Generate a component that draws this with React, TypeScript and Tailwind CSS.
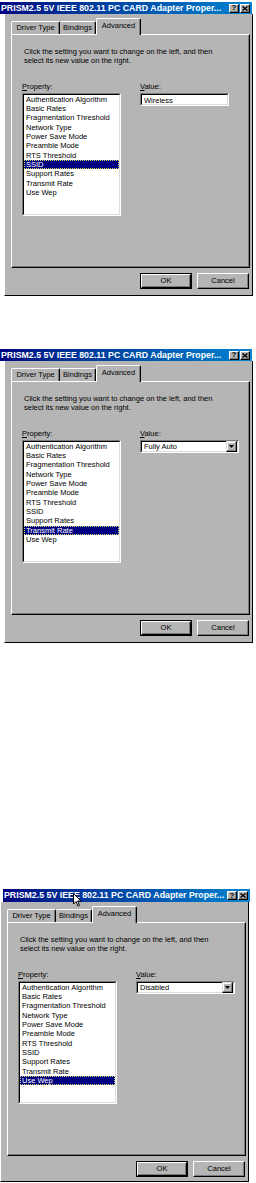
import React from "react";

const items = [
  "Authentication Algorithm",
  "Basic Rates",
  "Fragmentation Threshold",
  "Network Type",
  "Power Save Mode",
  "Preamble Mode",
  "RTS Threshold",
  "SSID",
  "Support Rates",
  "Transmit Rate",
  "Use Wep",
];

function TitleBtn({ children }: { children: React.ReactNode }) {
  return (
    <div className="flex h-[9px] w-[10px] items-center justify-center border border-t-white border-l-white border-r-black border-b-black bg-[#b5b5b5] shadow-[inset_-1px_-1px_#7b7b7b]">
      {children}
    </div>
  );
}

function TitleBar({ cls }: { cls: string }) {
  return (
    <div className={`flex items-center justify-between bg-linear-to-r from-[#000080] to-[#1084d0] ${cls}`}>
      <span className="whitespace-nowrap pl-[1px] text-[8.8px] font-bold leading-none text-white">
        PRISM2.5 5V IEEE 802.11 PC CARD Adapter Proper...
      </span>
      <div className="flex gap-[1px] pr-[2px]">
        <TitleBtn>
          <span className="text-[8px] font-bold leading-none text-black">?</span>
        </TitleBtn>
        <TitleBtn>
          <svg width="6" height="5" viewBox="0 0 6 5">
            <path d="M0.5 0.5 L5.5 4.5 M5.5 0.5 L0.5 4.5" stroke="black" strokeWidth="1.4" />
          </svg>
        </TitleBtn>
      </div>
    </div>
  );
}

function Sunken({ cls, children }: { cls: string; children?: React.ReactNode }) {
  return (
    <div className={`border border-t-[#7b7b7b] border-l-[#7b7b7b] border-r-white border-b-white ${cls}`}>
      <div className="h-full w-full border border-t-black border-l-black border-r-[#dcdcdc] border-b-[#dcdcdc] bg-white">
        {children}
      </div>
    </div>
  );
}

function Btn({ label, def }: { label: string; def?: boolean }) {
  if (def) {
    return (
      <div className="h-[16px] w-[52px] border border-black">
        <div className="flex h-full w-full items-center justify-center border border-t-white border-l-white border-r-black border-b-black shadow-[inset_-1px_-1px_#7b7b7b]">
          <span className="text-[7.5px] leading-none text-black">{label}</span>
        </div>
      </div>
    );
  }
  return (
    <div className="flex h-[16px] w-[52px] items-center justify-center border border-t-white border-l-white border-r-black border-b-black shadow-[inset_-1px_-1px_#7b7b7b]">
      <span className="text-[7.5px] leading-none text-black">{label}</span>
    </div>
  );
}

function ValueControl({ kind, value }: { kind: "text" | "combo"; value: string }) {
  if (kind === "text") {
    return (
      <Sunken cls="mt-[1px] h-[13px] w-[89px]">
        <div className="pl-[2px] text-[7.5px] leading-[11px] text-black">{value}</div>
      </Sunken>
    );
  }
  return (
    <Sunken cls="mt-[1px] h-[13px] w-[99px]">
      <div className="flex h-full items-center justify-between">
        <div className="pl-[2px] text-[7.5px] leading-[11px] text-black">{value}</div>
        <div className="flex h-[11px] w-[11px] items-center justify-center border border-t-[#dcdcdc] border-l-[#dcdcdc] border-r-black border-b-black bg-[#b5b5b5] shadow-[inset_-1px_-1px_#7b7b7b,inset_1px_1px_white]">
          <svg width="5" height="3" viewBox="0 0 5 3">
            <path d="M0 0 H5 L2.5 3 Z" fill="black" />
          </svg>
        </div>
      </div>
    </Sunken>
  );
}

function Dialog({
  titleCls,
  bodyCls,
  selected,
  kind,
  value,
}: {
  titleCls: string;
  bodyCls: string;
  selected: number;
  kind: "text" | "combo";
  value: string;
}) {
  return (
    <div className="flex flex-col">
      <TitleBar cls={titleCls} />
      <div className={`flex flex-col border-l border-r border-b border-l-white border-r-black border-b-black bg-[#b5b5b5] ${bodyCls}`}>
        {/* tabs */}
        <div className="ml-[6px] mt-[4px] flex h-[16px] items-end">
          <div className="flex h-[13px] w-[49px] items-center justify-center rounded-t-[2px] border-t border-l border-r border-t-white border-l-white border-r-black shadow-[inset_-1px_0_#7b7b7b]">
            <span className="text-[7.5px] leading-none text-black">Driver Type</span>
          </div>
          <div className="flex h-[13px] w-[36px] items-center justify-center rounded-t-[2px] border-t border-r border-t-white border-r-black shadow-[inset_-1px_0_#7b7b7b]">
            <span className="text-[7.5px] leading-none text-black">Bindings</span>
          </div>
          <div className="relative z-10 -mb-[1px] flex h-[17px] w-[45px] items-start justify-center rounded-t-[2px] border-t border-l border-r border-t-white border-l-white border-r-black bg-[#b5b5b5] pt-[3px] shadow-[inset_-1px_0_#7b7b7b]">
            <span className="text-[7.5px] leading-none text-black">Advanced</span>
          </div>
        </div>
        {/* panel */}
        <div className="ml-[6px] h-[234px] w-[239px] border border-t-white border-l-white border-r-black border-b-black shadow-[inset_-1px_-1px_#7b7b7b]">
          <div className="ml-[12px] mt-[12px] text-[7.5px] leading-[9.3px] text-black">
            <div>Click the setting you want to change on the left, and then</div>
            <div>select its new value on the right.</div>
          </div>
          <div className="ml-[10px] mt-[16px] flex">
            <div className="flex w-[99px] flex-col">
              <div className="text-[7.5px] leading-[9.3px] text-black">
                <span className="underline">P</span>roperty:
              </div>
              <Sunken cls="mt-[2px] h-[123px] w-[99px]">
                <div className="flex flex-col">
                  {items.map((it, i) =>
                    i === selected ? (
                      <div
                        key={it}
                        className="h-[9.3px] border border-dotted border-[#d8d870] bg-[#000080] pl-[1px] text-[7.5px] leading-[7.3px] text-white"
                      >
                        {it}
                      </div>
                    ) : (
                      <div key={it} className="h-[9.3px] pl-[2px] text-[7.5px] leading-[9.3px] text-black">
                        {it}
                      </div>
                    )
                  )}
                </div>
              </Sunken>
            </div>
            <div className="ml-[19px] flex flex-col">
              <div className="text-[7.5px] leading-[9.3px] text-black">
                <span className="underline">V</span>alue:
              </div>
              <div className="mt-[1px]">
                <ValueControl kind={kind} value={value} />
              </div>
            </div>
          </div>
        </div>
        {/* buttons */}
        <div className="mt-[5px] flex justify-end gap-[5px] pr-[3px]">
          <Btn label="OK" def />
          <Btn label="Cancel" />
        </div>
      </div>
    </div>
  );
}

export default function App() {
  return (
    <div className="min-h-[1183px] w-[256px] bg-white font-['Liberation_Sans',Arial,sans-serif]">
      <div className="pt-[2px]">
        <Dialog
          titleCls="ml-0 h-[12px] w-[252px]"
          bodyCls="ml-[4px] h-[282px] w-[249px]"
          selected={7}
          kind="text"
          value="Wireless"
        />
      </div>
      <div className="mt-[53px]">
        <Dialog
          titleCls="ml-0 h-[12px] w-[252px]"
          bodyCls="ml-[4px] h-[282px] w-[249px]"
          selected={9}
          kind="combo"
          value="Fully Auto"
        />
      </div>
      <div className="relative mt-[246px]">
        <Dialog
          titleCls="ml-[3px] h-[13px] w-[247px]"
          bodyCls="ml-[0px] h-[280px] w-[249px]"
          selected={10}
          kind="combo"
          value="Disabled"
        />
        <svg className="absolute left-[73px] top-[4px]" width="9" height="14" viewBox="0 0 9 14">
          <path d="M0.5 0.5 V11 L3 8.5 L5 13 L6.5 12.3 L4.6 8 H8 Z" fill="white" stroke="black" strokeWidth="1" />
        </svg>
      </div>
    </div>
  );
}
